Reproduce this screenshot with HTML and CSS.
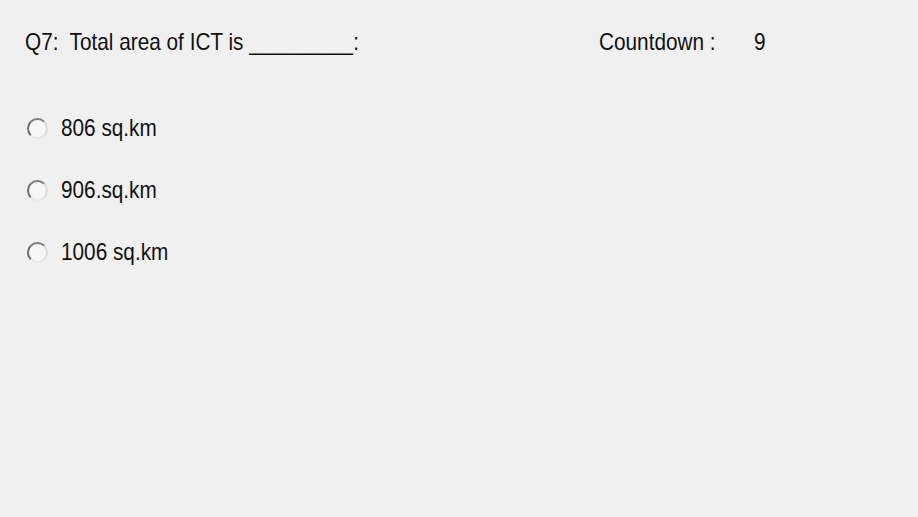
FILE: index.html
```html
<!DOCTYPE html>
<html>
<head>
<meta charset="utf-8">
<link rel="stylesheet" href="styles.css">
</head>
<body>
<div class="form">
  <div class="header">
    <div class="question"><span class="txt">Q7:&nbsp; Total area of ICT is _________:</span></div>
    <div class="countdown">
      <span class="cd-label"><span class="txt">Countdown :</span></span>
      <span class="cd-value"><span class="txt">9</span></span>
    </div>
  </div>
  <div class="options">
    <label class="option"><span class="radio"></span><span class="txt">806 sq.km</span></label>
    <label class="option"><span class="radio"></span><span class="txt">906.sq.km</span></label>
    <label class="option"><span class="radio"></span><span class="txt">1006 sq.km</span></label>
  </div>
</div>
</body>
</html>
```
FILE: styles.css
```css
html, body {
  margin: 0;
  padding: 0;
  background: #f0f0f0;
}
body {
  width: 918px;
  height: 517px;
  overflow: hidden;
  font-family: "Liberation Sans", Arial, sans-serif;
  font-size: 24px;
  line-height: 24px;
  color: #111;
}
.txt {
  display: inline-block;
  white-space: pre;
  transform: scaleX(0.865);
  transform-origin: 0 50%;
}
.form {
  padding: 30px 0 0 25px;
}
.header {
  display: flex;
  height: 24px;
}
.question {
  width: 574px;
}
.countdown {
  display: flex;
}
.cd-label {
  width: 155px;
}
.options {
  display: flex;
  flex-direction: column;
  gap: 38px;
  margin-top: 62px;
  margin-left: 2px;
}
.option {
  display: flex;
  align-items: center;
  height: 24px;
}
.radio {
  width: 17px;
  height: 17px;
  border-radius: 50%;
  border: 2px solid;
  border-color: #7e7e7e #dcdcdc #e8e8e8 #6e6e6e;
  background: #f7f7f7;
  margin-right: 13px;
  box-sizing: content-box;
  flex: none;
}
```
